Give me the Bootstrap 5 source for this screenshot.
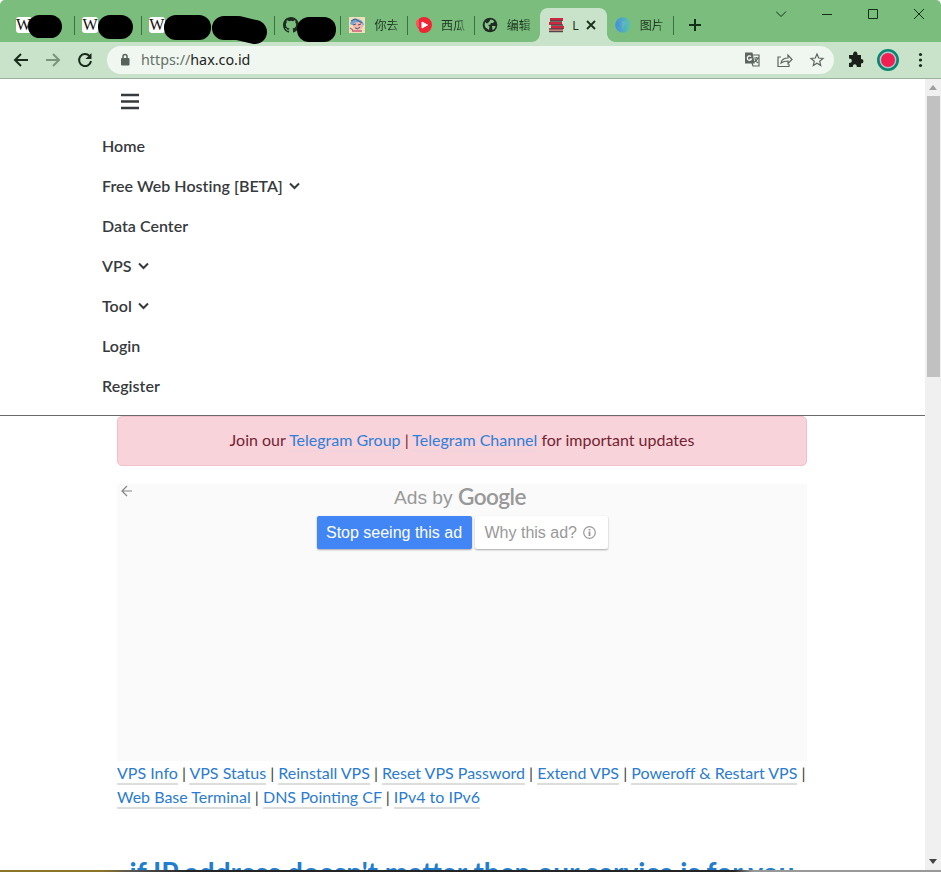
<!DOCTYPE html>
<html lang="en">
<head>
<meta charset="utf-8">
<title>Hax</title>
<meta name="viewport" content="width=device-width, initial-scale=1">
<link href="https://cdn.jsdelivr.net/npm/bootstrap@5.3.0/dist/css/bootstrap.min.css" rel="stylesheet">
<style>
html,body{height:872px;overflow:hidden}
body{font-family:Lato,"Noto Sans CJK SC",sans-serif;font-size:16px;line-height:24px;color:#373a3c;background:#fff}
svg{display:block;flex:none}
.window{height:872px}
.tabstrip{height:42px;background:#7bbd7d;padding-left:7.5px;border-radius:5px 5px 0 0}
.tab{width:66.6px;height:34px;margin-top:8px;padding-left:8px;position:relative;flex:none;font:12px/34px "Noto Sans CJK SC",sans-serif;color:#1d3420;white-space:nowrap}
.tab.sep::after{content:"";position:absolute;right:-1px;top:8px;width:1px;height:19px;background:#39723e}
.tab.live{background:#c8e3ca;border-radius:8px 8px 0 0}
.tab.live::before,.tab.live::after{content:"";position:absolute;bottom:0;width:8px;height:8px}
.tab.live::before{left:-8px;background:radial-gradient(circle at 0 0,transparent 7.5px,#c8e3ca 8px)}
.tab.live::after{right:-8px;background:radial-gradient(circle at 100% 0,transparent 7.5px,#c8e3ca 8px)}
.tab.pic{padding-left:9px}
.tab-name{margin-left:9px;-webkit-mask-image:linear-gradient(90deg,#000 65%,#0007)}
.tab-x{margin-left:7px}
.new-tab{margin:18px 0 0 15px}
.wfav{width:16px;height:16px;background:#fff;border-radius:3px;font:16px/16px "Liberation Serif",serif;text-align:center;color:#111}
.blot{position:absolute;background:#000;border-radius:12px}
.b1{left:20px;top:7px;width:34px;height:23px}
.b2{left:24px;top:7px;width:35px;height:24px}
.b3{left:23px;top:7px;width:47px;height:25px}
.b4{left:4px;top:7px}
.b5{left:23px;top:9px;width:39px;height:25px}
.toolbar{height:37px;background:#c8e3ca;border-bottom:1px solid #9cae9e;padding-left:13px}
.omni{width:727px;height:28px;border-radius:14px;background:#f0f7f1;margin-left:14px;padding:0 9px 0 13px;font:14.3px "Noto Sans",sans-serif;color:#666f67}
.omni b{font-weight:400;color:#1f2421}
.url{margin-left:11px;padding-bottom:2px}
.page{height:791px;overflow:hidden}
.view{width:925px;overflow:hidden}
.site-nav{height:337px;border-bottom:1px solid #6b6b6b;padding:14px 0 0 102px}
.site-nav .nav-link{height:40px;padding:0;line-height:40px;font-weight:600;color:#373a3c;gap:6px;letter-spacing:.03px}
.burger{margin:0 0 16px 19px}
.main-col{width:690px;margin-left:117px}
.notice{height:50px;padding:11px 0 13px;border-radius:5px;background:#f8d3da;border:1px solid #f2bfca;color:#741f32;margin-bottom:18px}
.notice a{color:#2f7ed8;text-decoration:none;border-bottom:2px solid #f0d3dc;padding-bottom:1px}
.ad{height:277px;background:#fafafa;font-family:"Liberation Sans",Arial,sans-serif;position:relative}
.ad-back{position:absolute;left:4px;top:1px}
.ads-by{height:32px;font-size:19.2px;line-height:28px;color:#999;margin-left:-4px}
.brand-word{font:600 22.5px/26px Lato,sans-serif;letter-spacing:-.5px;color:#989898}
.ad-row{gap:3px}
.ad-btn{height:33px;border-radius:2px;font-size:16px;line-height:32px;border:0;box-shadow:0 1px 2px #0005}
.stop{background:#4285f4;color:#fff;width:155px;padding:0;text-align:center}
.why{background:#fff;color:#999;width:133px;padding:0 0 0 10px}
.why svg{margin-left:6px}
.links a{color:#2b7bd0;text-decoration:none;border-bottom:2px solid #dbdedb;padding-bottom:1px}
.headline{font-size:28px;line-height:34px;font-weight:700;color:#217dcd;margin-top:46px;white-space:nowrap;text-align:center}
.scroll{width:16px;background:#f0f0f0}
.thumb{width:13px;height:281px;background:#c1c1c1}
.edge{height:2px;background:linear-gradient(90deg,#8b7426 0 11%,#555 14%,#242424 20% 78%,#999 80%)}
</style>
<script src="https://cdn.jsdelivr.net/npm/bootstrap@5.3.0/dist/js/bootstrap.bundle.min.js"></script>
</head>
<body>
<div class="window d-flex flex-column">
<header class="tabstrip d-flex">
 <div class="tab sep d-flex align-items-center"><div class="wfav">W</div><span class="blot b1"></span></div>
 <div class="tab sep d-flex align-items-center"><div class="wfav">W</div><span class="blot b2"></span></div>
 <div class="tab d-flex align-items-center"><div class="wfav">W</div><span class="blot b3"></span></div>
 <div class="tab sep"><svg class="position-absolute b4" width="57" height="30"><path d="M13 13H27L44 17" stroke="#000" stroke-width="24" stroke-linecap="round" stroke-linejoin="round" fill="none"/></svg></div>
 <div class="tab sep pic d-flex align-items-center"><svg width="16" height="16" viewBox="0 0 16 16" fill="#1d2b20"><path d="M8 0C3.58 0 0 3.58 0 8c0 3.54 2.29 6.53 5.47 7.59.4.07.55-.17.55-.38v-1.49c-2.01.37-2.53-.49-2.69-.94-.09-.23-.48-.94-.82-1.13-.28-.15-.68-.52-.01-.53.63-.01 1.08.58 1.23.82.72 1.21 1.87.87 2.33.66.07-.52.28-.87.51-1.07-1.78-.2-3.64-.89-3.64-3.95 0-.87.31-1.59.82-2.15-.08-.2-.36-1.02.08-2.12 0 0 .67-.21 2.2.82a7.4 7.4 0 0 1 4 0c1.53-1.04 2.2-.82 2.2-.82.44 1.1.16 1.92.08 2.12.51.56.82 1.27.82 2.15 0 3.07-1.87 3.75-3.65 3.95.29.25.54.73.54 1.48v2.2c0 .21.15.46.55.38A8 8 0 0 0 8 0z"/></svg><span class="blot b5"></span></div>
 <div class="tab sep pic d-flex align-items-center"><svg width="16" height="16"><path fill="#ede0bb" d="M0 0h16v16H0z"/><path d="M1 7Q3 0 9 2q5 1 6 6l-3 1-9-1z" fill="#6ba7d4"/><ellipse cx="9" cy="9" rx="5" ry="4" fill="#f0b7ad"/><path d="M2 4l4-2 7 4M4 8l3-1M9 8l3-1M6 11q3 2 5-1" stroke="#594f75" fill="none"/><path d="M3 14h10M1 11l3 2" stroke="#cb6079" stroke-width="1.5"/></svg><span class="tab-name">你去</span></div>
 <div class="tab sep pic d-flex align-items-center"><svg width="16" height="16"><path d="M1 5Q3 0 8 0a8 8 0 0 1 0 16Q3 16 3 12 0 10 1 5z" fill="#ef2435"/><path d="M0 8a5 5 0 0 1 3-6v9z" fill="#f6565a"/><path d="M6 5L11.500 8 6 11z" fill="#fff" stroke="#fff" stroke-linejoin="round"/></svg><span class="tab-name">西瓜</span></div>
 <div class="tab d-flex align-items-center"><svg width="16" height="16"><circle cx="8" cy="8" r="7.300" fill="#202c23"/><path d="M8.500 2.500c1.500 0 3 .8 3.800 2L11 6 8.800 6 8.500 7.500 6 8 7.500 9.500 7 13 3.500 10.500Q2 8 3 5l2 1.500 2-1.500z" fill="#88c38a"/><path d="M10 9h3.500c0 2-1.500 3.500-3 4z" fill="#88c38a"/></svg><span class="tab-name">编辑</span></div>
 <div class="tab live d-flex align-items-center"><svg width="17" height="17"><path d="M2 1h13v3H2zM1 5h13v3H1zM3 9h13v3H3z" fill="#cb2742"/><path d="M2 4h12M3 8h12M1 12h14M1 14.500h14" stroke="#514646" stroke-width="1.500"/><path d="M1 13h14" stroke="#d4525d"/></svg><span class="tab-x">L</span><svg class="tab-x" width="10" height="10"><path d="M1 1l8 8M9 1L1 9" stroke="#183018" stroke-width="1.800"/></svg></div>
 <div class="tab sep d-flex align-items-center"><svg width="16" height="16"><defs><linearGradient id="orb"><stop offset="0" stop-color="#4490df"/><stop offset="1" stop-color="#5cc6a4"/></linearGradient></defs><circle cx="8" cy="8" r="7.800" fill="url(#orb)"/><path d="M7 4h4l2.500 3-3 1-3.500 4z" fill="#62b5c0"/></svg><span class="tab-name">图片</span></div>
 <svg class="new-tab" width="14" height="14"><path d="M7 1v12M1 7h12" stroke="#123018" stroke-width="2"/></svg>
 <svg class="ms-auto" width="165" height="28" fill="none" stroke="#123018"><path d="M0 11.500l5 5 5-5M46 14.500h10M92.500 9.500h9v9h-9zM138 9l10 10M148 9l-10 10"/></svg>
</header>
<div class="toolbar d-flex align-items-center">
 <svg width="80" height="18" fill="none" stroke="#182b1b" stroke-width="2"><path d="M15 9H2M8 3L2 9l6 6"/><path d="M33 9h13M40 3l6 6-6 6" stroke="#78947b"/><path d="M76.500 5A6 6 0 1 0 78 10"/><path d="M78.500 2v6h-6z" fill="#182b1b" stroke="none"/></svg>
 <div class="omni d-flex align-items-center"><svg width="10" height="14"><path d="M3 6V3.500a2 2 0 0 1 4 0V6" fill="none" stroke="#59615b" stroke-width="1.500"/><rect x="1" y="5" width="8.500" height="7.500" rx="1" fill="#59615b"/></svg><span class="url">https://<b>hax.co.id</b></span>
  <svg class="ms-auto" width="80" height="18" fill="none" stroke="#5c665e" stroke-width="1.200"><path d="M.5 2H7l2 10H.5z" fill="#5c665e"/><path d="M8 4h6v11H8l-1-3M9 7h5M11.500 6v1M13 7q-1 3-4 4M10 8q1 3 3 4"/><path d="M6 5.500A2.200 2.200 0 1 0 6.500 8H4.500" stroke="#fff"/><path d="M36 6h-3v9.500h11V13M36 12q1-5 7-5V4l4 4.500-4 4V10q-4 0-7 2z"/><path d="M72 3l1.700 4 4.300.4-3.300 2.800 1 4.300-3.700-2.300-3.700 2.300 1-4.300L66 7.400l4.300-.4z"/></svg>
 </div>
 <svg width="107" height="30" viewBox="834 0 107 30"><path d="M849 10h4q0-3.500 2.300-3.500T857.500 10h3.500v4q2.500 0 2.500 2.200T861 18.500V22h-4.200q0-2.800-2-2.800t-2 2.800H849v-4q2.800 0 2.800-2.200T849 13.500z" fill="#182019"/><circle cx="888" cy="15" r="9.700" fill="#b5c3d0" stroke="#078770" stroke-width="2.600"/><circle cx="888" cy="15" r="7" fill="#f01f51"/><g fill="#182b1b"><circle cx="920.500" cy="9.500" r="1.600"/><circle cx="920.500" cy="15" r="1.600"/><circle cx="920.500" cy="20.500" r="1.600"/></g></svg>
</div>
<div class="page d-flex">
 <main class="view">
  <nav class="site-nav">
   <svg class="burger" width="18" height="17"><path d="M0 2h18M0 8.500h18M0 15h18" stroke="#373a3c" stroke-width="2.500"/></svg>
   <div class="nav flex-column">
    <a class="nav-link">Home</a>
    <a class="nav-link d-flex align-items-center">Free Web Hosting [BETA]<svg width="11" height="8"><path d="M1 1.500l4.500 4.500L10 1.500" fill="none" stroke="#373a3c" stroke-width="2"/></svg></a>
    <a class="nav-link">Data Center</a>
    <a class="nav-link d-flex align-items-center">VPS<svg width="11" height="8"><path d="M1 1.500l4.500 4.500L10 1.500" fill="none" stroke="#373a3c" stroke-width="2"/></svg></a>
    <a class="nav-link d-flex align-items-center">Tool<svg width="11" height="8"><path d="M1 1.500l4.500 4.500L10 1.500" fill="none" stroke="#373a3c" stroke-width="2"/></svg></a>
    <a class="nav-link">Login</a>
    <a class="nav-link">Register</a>
   </div>
  </nav>
  <div class="main-col">
   <div class="notice text-center">Join our <a href="#">Telegram Group</a> | <a href="#">Telegram Channel</a> for important updates</div>
   <section class="ad">
    <svg class="ad-back" width="12" height="12"><path d="M11 6H1.500M6 1L1 6l5 5" fill="none" stroke="#858585" stroke-width="1.200"/></svg>
    <div class="ads-by d-flex justify-content-center"><span>Ads by&nbsp;</span><span class="brand-word">Google</span></div>
    <div class="ad-row d-flex justify-content-center"><button class="ad-btn stop">Stop seeing this ad</button><button class="ad-btn why d-flex align-items-center">Why this ad?<svg width="13" height="13" fill="none" stroke="#999" stroke-width="1.200"><circle cx="6.500" cy="6.500" r="5.800"/><path d="M6.500 5.500v4.500M6.500 3v1.500" stroke-width="1.800"/></svg></button></div>
   </section>
   <div class="links"><a href="#">VPS Info</a> | <a href="#">VPS Status</a> | <a href="#">Reinstall VPS</a> | <a href="#">Reset VPS Password</a> | <a href="#">Extend VPS</a> | <a href="#">Poweroff &amp; Restart VPS</a> | <a href="#">Web Base Terminal</a> | <a href="#">DNS Pointing CF</a> | <a href="#">IPv4 to IPv6</a></div>
   <h1 class="headline">if IP address doesn't matter then our service is for you</h1>
  </div>
 </main>
 <aside class="scroll d-flex flex-column align-items-center"><svg width="16" height="17"><path d="M4 11l4-5 4 5z" fill="#a0a0a0"/></svg><div class="thumb"></div><svg class="mt-auto" width="16" height="17"><path d="M4 6l4 5 4-5z" fill="#444"/></svg></aside>
</div>
<div class="edge"></div>
</div>
</body>
</html>
